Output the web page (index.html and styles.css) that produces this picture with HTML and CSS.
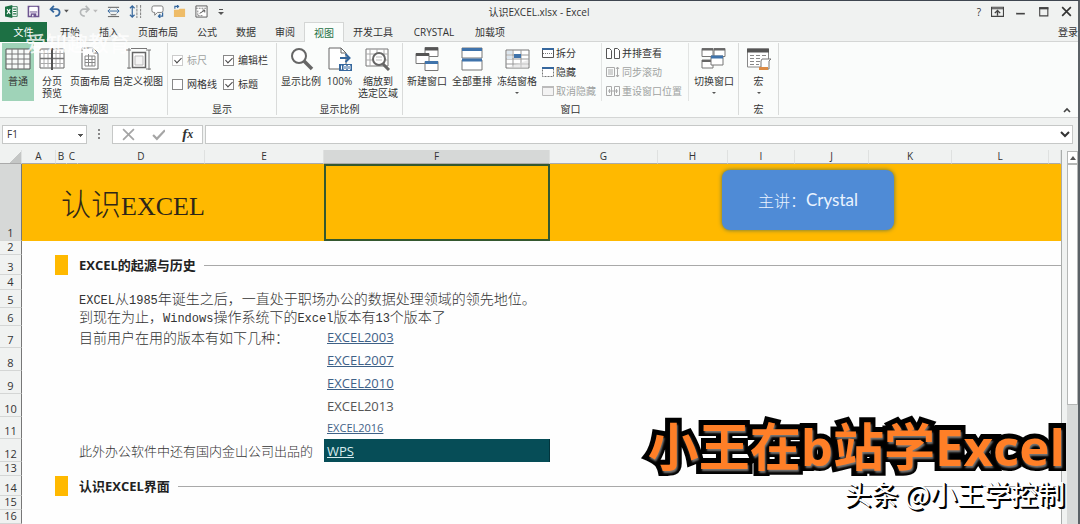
FILE: index.html
```html
<!DOCTYPE html>
<html lang="zh-CN">
<head>
<meta charset="utf-8">
<title>认识EXCEL.xlsx - Excel</title>
<link rel="stylesheet" href="styles.css">
</head>
<body>
<div class="window">
  <header class="titlebar">
    <div class="quick">
      <svg class="q" viewBox="0 0 16 16"><path d="M8 2h7v12H8" fill="#fff" stroke="#1d7044"/><path d="M10 5h4M10 8h4M10 11h4" stroke="#1d7044" stroke-width="1.5"/><path d="M0 2l9-2v16l-9-2z" fill="#1d7044"/><path d="M2.5 5l4 6M6.5 5l-4 6" stroke="#fff" stroke-width="1.4"/></svg>
      <button class="ib" aria-label="保存"><svg class="q" viewBox="0 0 14 14"><path d="M1.500 1.500h11v11h-11z" fill="#f6f2fa" stroke="#6d5590" stroke-width="1.600"/><path d="M3 2h8v5H3z" fill="#fff"/><path d="M3 7.500h8" stroke="#6d5590"/><path d="M4 9h6v4H4z" fill="#6d5590"/><path d="M5.500 10.500h1.500v2H5.500z" fill="#fff"/></svg></button>
      <button class="ib" aria-label="撤消"><svg class="w" viewBox="0 0 21 14"><path d="M5 1L1.500 4.500 5 8M2 4.500h5.500c5 0 5 7-1 7.500" fill="none" stroke="#35679d" stroke-width="2"/><path d="M16 5h5l-2.500 3z" fill="#555"/></svg></button>
      <button class="ib" aria-label="恢复"><svg class="w" viewBox="0 0 21 14"><path d="M8 1l3.500 3.500L8 8M11 4.500H6c-5 0-5 7 1 7.500" fill="none" stroke="#b4b7b8" stroke-width="1.800"/><path d="M16 5h5l-2.500 3z" fill="#bbb"/></svg></button>
      <button class="ib" aria-label="行高"><svg class="q" viewBox="0 0 14 14"><path d="M1 2.500h12M1 12.500h12M4 10.500h6" stroke="#555"/><path d="M1 6.500h12M3.500 4L1 6.500 3.500 9M10.500 4L13 6.500 10.500 9" fill="none" stroke="#35679d"/></svg></button>
      <button class="ib" aria-label="列宽"><svg class="q" viewBox="0 0 14 14"><path d="M8.500 0v14M12.500 0v14" stroke="#777" stroke-dasharray="3 1"/><path d="M3.500 1v12M1 3.500L3.500 1 6 3.500M1 10.500L3.500 13 6 10.500" fill="none" stroke="#35679d" stroke-width="1.300"/></svg></button>
      <button class="ib" aria-label="批注"><svg class="q" viewBox="0 0 14 14"><path d="M3 1h8q2 0 2 2v3q0 2-2 2H7l-3 3V8H3Q1 8 1 6V3q0-2 2-2z" fill="#fff" stroke="#777"/><path d="M12.500 8v4H8M10 10l-2 2 2 2" fill="none" stroke="#35679d" stroke-width="1.300"/></svg></button>
      <button class="ib" aria-label="打开"><svg class="q" viewBox="0 0 14 14"><path d="M1 5h5l1-1h6v9H1z" fill="#eebc68"/><path d="M2 4V1.500h4M4.500 0L6 1.500 4.500 3" fill="none" stroke="#35679d" stroke-width="1.200"/></svg></button>
      <button class="ib" aria-label="控件"><svg class="q" viewBox="0 0 14 14"><path d="M1 1h12v12H1z" fill="#fff" stroke="#555"/><path d="M1 3.500h12M3 6v5M3 11.500h5" stroke="#777" stroke-dasharray="2 1"/><path d="M5 9l5-3M8 5.500h2.500V8" fill="none" stroke="#444"/></svg></button>
      <button class="ib" aria-label="自定义快速访问工具栏"><svg class="s" viewBox="0 0 6 8"><path d="M1 1.500h4" stroke="#555"/><path d="M0 4h6L3 7z" fill="#555"/></svg></button>
    </div>
    <h1 class="doc">认识EXCEL.xlsx - Excel</h1>
    <div class="controls">
      <button class="ib" aria-label="帮助">?</button>
      <button class="ib" aria-label="功能区显示选项"><svg class="q" viewBox="0 0 12 12"><path d="M.5 2h11v8.500H.5zM.5 3.500h11" fill="none" stroke="#444"/><path d="M6 10V5M3.500 7.500L6 5l2.500 2.500" fill="none" stroke="#444" stroke-width="1.300"/></svg></button>
      <button class="ib" aria-label="最小化"><svg class="q" viewBox="0 0 12 12"><path d="M2 8h8" stroke="#444" stroke-width="1.500"/></svg></button>
      <button class="ib" aria-label="最大化"><svg class="q" viewBox="0 0 12 12"><path d="M2.500 2.500h7.500v7.500H2.500z" fill="none" stroke="#444"/><path d="M2 3h8.500" stroke="#444" stroke-width="2"/></svg></button>
      <button class="ib" aria-label="关闭"><svg class="q" viewBox="0 0 12 12"><path d="M2 2l8 8M10 2l-8 8" stroke="#333" stroke-width="1.500"/></svg></button>
    </div>
  </header>

  <nav class="tabs">
    <button class="tab file">文件</button>
    <button class="tab">开始</button>
    <button class="tab">插入</button>
    <button class="tab">页面布局</button>
    <button class="tab">公式</button>
    <button class="tab">数据</button>
    <button class="tab">审阅</button>
    <button class="tab active">视图</button>
    <button class="tab">开发工具</button>
    <button class="tab">CRYSTAL</button>
    <button class="tab">加载项</button>
    <button class="tab login">登录</button>
  </nav>

  <section class="ribbon">
    <div class="group views">
      <div class="items">
        <button class="big on"><svg viewBox="0 0 26 24"><path d="M1 2h24v20H1z" fill="#f7faf8" stroke="#555"/><path d="M7 2v20M13 2v20M19 2v20M1 7h24M1 12h24M1 17h24" stroke="#777"/></svg><span>普通</span></button>
        <button class="big"><svg viewBox="0 0 26 24"><path d="M1 2h24v19H1z" fill="#fff" stroke="#666"/><path d="M5 2v19M9 2v19M17 2v19M21 2v19M1 6.500h24M1 16.500h24" stroke="#aaa"/><path d="M1 11.500h24" stroke="#777" stroke-width="1.500"/><path d="M13 1v22" stroke="#555" stroke-width="2"/></svg><span>分页<br>预览</span></button>
        <button class="big"><svg viewBox="0 0 26 24"><path d="M5 1h11l5 5v16H5z" fill="#fff" stroke="#666"/><path d="M16 1v5h5" fill="none" stroke="#666"/><path d="M8 9h10v10H8zM11.500 7v12M15 9v10M8 12.500h10M8 15.500h10" fill="none" stroke="#888"/></svg><span>页面布局</span></button>
        <button class="big"><svg viewBox="0 0 26 24"><path d="M1 3h5M4 1v21M24 3v20M21 3h5M21 22h5M2 21h4M6 1.500h16" stroke="#777" fill="none"/><path d="M7.500 5.500h13v15h-13z" fill="#fff" stroke="#666" stroke-width="1.500"/><path d="M10 9h8v9h-8z" fill="#f4f4f4" stroke="#bbb"/></svg><span>自定义视图</span></button>
      </div>
      <div class="caption">工作簿视图</div>
    </div>
    <div class="group show">
      <div class="items checks">
        <label class="off"><input type="checkbox" checked disabled>标尺</label>
        <label><input type="checkbox" checked>编辑栏</label>
        <label><input type="checkbox">网格线</label>
        <label><input type="checkbox" checked>标题</label>
      </div>
      <div class="caption">显示</div>
    </div>
    <div class="group zoom">
      <div class="items">
        <button class="big"><svg viewBox="0 0 26 24"><circle cx="11" cy="9" r="7" fill="#fff" stroke="#666" stroke-width="2"/><path d="M16 14l8 8" stroke="#666" stroke-width="3.500"/></svg><span>显示比例</span></button>
        <button class="big"><svg viewBox="0 0 26 24"><path d="M2 1h12l5 5v16H2z" fill="#fff" stroke="#666"/><path d="M14 1v5h5" fill="none" stroke="#666"/><path d="M13 11h9M18.500 7l4 4-4 4" fill="none" stroke="#35679d" stroke-width="2"/><path d="M12 17h13v7H12z" fill="#35679d"/><path d="M14.500 18.500v4M17 18.500h2v4h-2zM21 18.500h2v4h-2z" stroke="#fff" fill="none"/></svg><span>100%</span></button>
        <button class="big"><svg viewBox="0 0 26 24"><path d="M1 2h22v17H1z" fill="#fff" stroke="#777"/><path d="M5 2v17M12 2v17M19 2v17M1 7h22M1 13h22" stroke="#aaa"/><circle cx="14" cy="12" r="6" fill="#fff" stroke="#666" stroke-width="2"/><path d="M11 10h6M11 13h6" stroke="#bbb"/><path d="M18 17l6 6" stroke="#666" stroke-width="3"/></svg><span>缩放到<br>选定区域</span></button>
      </div>
      <div class="caption">显示比例</div>
    </div>
    <div class="group panes">
      <div class="items">
        <button class="big"><svg viewBox="0 0 26 24"><path d="M11 .5h13v9H11z" fill="#fff" stroke="#777"/><path d="M11 2h13" stroke="#555" stroke-width="3"/><path d="M2 6.500h13v10H2z" fill="#fff" stroke="#777"/><path d="M2 7.500h13" stroke="#555" stroke-width="3"/><path d="M11 14.500h13v9H11z" fill="#fff" stroke="#777"/><path d="M11 15.500h13" stroke="#3f73ab" stroke-width="3"/></svg><span>新建窗口</span></button>
        <button class="big"><svg viewBox="0 0 26 24"><path d="M3 1h20v10H3zM3 13h20v10H3z" fill="#fff" stroke="#777"/><path d="M3 2.500h20M3 13h20" stroke="#3f73ab" stroke-width="3"/></svg><span>全部重排</span></button>
        <button class="big drop"><svg viewBox="0 0 26 24"><path d="M2 3h23v18H2z" fill="#fff" stroke="#777"/><path d="M9 3v18M17 3v18M2 8h23M2 12h23M2 17h23" stroke="#999"/><path d="M3 4h5v3H3zM3 9h5v3H3z" fill="#dce6ee"/><path d="M10 7h7v4h-7z" fill="#3f73ab"/><path d="M3 21l21-8v8z" fill="#ddd" opacity=".6"/></svg><span>冻结窗格</span></button>
        <div class="small">
          <button class="line"><svg viewBox="0 0 12 12"><path d="M.5 1.500h11v9H.5z" fill="#fff" stroke="#555"/><path d="M0 2h12" stroke="#35679d" stroke-width="2"/><path d="M1 6.500h10" stroke="#777" stroke-dasharray="1 1"/></svg>拆分</button>
          <button class="line"><svg viewBox="0 0 12 12"><path d="M.5 1.500h11v9H.5z" fill="#fff" stroke="#777" stroke-dasharray="2 1"/><path d="M0 2h12" stroke="#35679d" stroke-width="2"/></svg>隐藏</button>
          <button class="line off" disabled><svg viewBox="0 0 12 12"><path d="M.5 1.500h11v9H.5z" fill="#f3f3f3" stroke="#bbb"/><path d="M0 2h12" stroke="#bbb" stroke-width="2"/></svg>取消隐藏</button>
        </div>
        <div class="small ruled">
          <button class="line"><svg class="wide" viewBox="0 0 14 12"><path d="M.5 1.500h3l2 2v8h-5zM8.500 1.500h3l2 2v8h-5z" fill="#fff" stroke="#555"/></svg>并排查看</button>
          <button class="line off" disabled><svg class="wide" viewBox="0 0 14 12"><path d="M.5 1.500h8v9h-8zM2 4h5M2 6h5M2 8h5M11.500 1v10M10 3l1.500-2L13 3M10 9l1.500 2L13 9" fill="none" stroke="#aaa"/></svg>同步滚动</button>
          <button class="line off" disabled><svg class="wide" viewBox="0 0 14 12"><path d="M.5 1.500h5v9h-5zM8.500 1.500h5v9h-5zM2 6h10M3.500 4v4M10.500 4v4" fill="none" stroke="#aaa"/></svg>重设窗口位置</button>
        </div>
        <button class="big drop"><svg viewBox="0 0 26 24"><path d="M1 1.500h11v8H1zM13 1.500h11v8H13zM1 13h11v8H1z" fill="#fff" stroke="#777"/><path d="M1 2.500h11M13 2.500h11M1 14h11" stroke="#666" stroke-width="2"/><path d="M10 9h12v9H10z" fill="#fff" stroke="#777"/><path d="M10 10h12" stroke="#3f73ab" stroke-width="3"/></svg><span>切换窗口</span></button>
      </div>
      <div class="caption">窗口</div>
    </div>
    <div class="group macro">
      <div class="items">
        <button class="big drop"><svg viewBox="0 0 26 24"><path d="M1.500 2h21v18h-21z" fill="#fff" stroke="#888"/><path d="M1 3.500h22" stroke="#555" stroke-width="4"/><path d="M4 8.500h4M10 8.500h4M16 8.500h4M4 11.500h4M10 11.500h4M4 14.500h4M10 14.500h4M4 17.500h4M10 17.500h3" stroke="#888"/><path d="M16 12h9l-2 2v8h-8v-8z" fill="#fff" stroke="#777"/><path d="M13 20h9v3h-9z" fill="#dc8b45"/></svg><span>宏</span></button>
      </div>
      <div class="caption">宏</div>
    </div>
    <button class="ib collapse" aria-label="折叠功能区"><svg class="s" viewBox="0 0 8 8"><path d="M1 6l3-3 3 3" fill="none" stroke="#444" stroke-width="1.600"/></svg></button>
  </section>

  <section class="formula">
    <select class="namebox" aria-label="名称框"><option>F1</option></select>
    <svg class="dots" viewBox="0 0 4 12"><path d="M1 1h2v2H1zM1 5h2v2H1zM1 9h2v2H1z" fill="#888"/></svg>
    <div class="fx">
      <button class="ib" aria-label="取消"><svg class="q" viewBox="0 0 12 12"><path d="M1 1l10 10M11 1L1 11" stroke="#a5a5a5" stroke-width="1.600"/></svg></button>
      <button class="ib" aria-label="输入"><svg class="q" viewBox="0 0 12 12"><path d="M1 6.500L4.500 10 12 2" fill="none" stroke="#a5a5a5" stroke-width="2"/></svg></button>
      <button class="ib func" aria-label="插入函数">f<small>x</small></button>
    </div>
    <div class="entry">
      <input type="text" aria-label="编辑栏">
      <svg class="chev" viewBox="0 0 10 8"><path d="M1 2l4 4 4-4" fill="none" stroke="#333" stroke-width="2"/></svg>
    </div>
  </section>

  <main class="sheet">
    <table class="grid">
      <colgroup><col class="c-n"><col class="c-a"><col class="c-b"><col class="c-c"><col class="c-d"><col class="c-e"><col class="c-f"><col class="c-g"><col class="c-h"><col class="c-i"><col class="c-j"><col class="c-k"><col class="c-l"><col></colgroup>
      <thead>
        <tr><th class="corner"></th><th>A</th><th>B</th><th>C</th><th>D</th><th>E</th><th class="sel">F</th><th>G</th><th>H</th><th>I</th><th>J</th><th>K</th><th>L</th><th></th></tr>
      </thead>
      <tbody>
        <tr class="banner"><th class="sel">1</th><td></td><td colspan="4" class="title">认识<span>EXCEL</span></td><td class="cursor"></td><td></td><td></td><td class="anchor"><div class="card">主讲：<span>Crystal</span></div></td><td colspan="4"></td></tr>
        <tr class="r14"><th>2</th><td colspan="13"></td></tr>
        <tr class="r20"><th>3</th><td></td><td class="mark"></td><td></td><td colspan="10"><h2><span>EXCEL的起源与历史</span></h2></td></tr>
        <tr class="r15"><th>4</th><td colspan="13"></td></tr>
        <tr class="r18"><th>5</th><td colspan="3"></td><td colspan="10" class="text"><span>EXCEL</span>从<span>1985</span>年诞生之后，一直处于职场办公的数据处理领域的领先地位。</td></tr>
        <tr class="r18"><th>6</th><td colspan="3"></td><td colspan="10" class="text">到现在为止，<span>Windows</span>操作系统下的<span>Excel</span>版本有<span>13</span>个版本了</td></tr>
        <tr class="r22"><th>7</th><td colspan="3"></td><td colspan="2" class="text">目前用户在用的版本有如下几种：</td><td class="ver"><a href="#">EXCEL2003</a></td><td colspan="7"></td></tr>
        <tr class="r23"><th>8</th><td colspan="5"></td><td class="ver"><a href="#">EXCEL2007</a></td><td colspan="7"></td></tr>
        <tr class="r23"><th>9</th><td colspan="5"></td><td class="ver"><a href="#">EXCEL2010</a></td><td colspan="7"></td></tr>
        <tr class="r23"><th>10</th><td colspan="5"></td><td class="ver">EXCEL2013</td><td colspan="7"></td></tr>
        <tr class="r22"><th>11</th><td colspan="5"></td><td class="ver tiny"><a href="#">EXCEL2016</a></td><td colspan="7"></td></tr>
        <tr class="r23"><th>12</th><td colspan="3"></td><td colspan="2" class="text tight">此外办公软件中还有国内金山公司出品的</td><td class="ver wps"><a href="#">WPS</a></td><td colspan="7"></td></tr>
        <tr class="r14"><th>13</th><td colspan="13"></td></tr>
        <tr class="r20"><th>14</th><td></td><td class="mark"></td><td></td><td colspan="10"><h2><span>认识EXCEL界面</span></h2></td></tr>
        <tr class="r14"><th>15</th><td colspan="13"></td></tr>
        <tr class="r14"><th>16</th><td colspan="13"></td></tr>
        <tr class="r20"><th></th><td></td><td class="mark"></td><td colspan="11"></td></tr>
      </tbody>
    </table>
    <div class="scroll">
      <button class="up" aria-label="向上滚动"><svg class="s" viewBox="0 0 8 8"><path d="M1 6l3-4 3 4z" fill="#555"/></svg></button>
      <div class="thumb"></div>
      <div class="track"></div>
    </div>
  </main>
</div>
<div class="watermark">爱知趣教育</div>
<div class="credits"><p class="headline">小王在b站学Excel</p><p class="author">头条 @小王学控制</p></div>
</body>
</html>
```

FILE: styles.css
```css
* { box-sizing: border-box; }
body {
  margin: 0;
  height: 100vh;
  overflow: hidden;
  position: relative;
  font: 10px/12px "Open Sans", "Noto Sans CJK SC", sans-serif;
  color: #333;
}
button {
  font: inherit;
  color: inherit;
  background: none;
  border: 0;
  padding: 0;
  white-space: nowrap;
}
svg { display: block; }
h1, h2, p { margin: 0; }
.window {
  height: 100%;
  display: flex;
  flex-direction: column;
  background: #f0f2f1;
  border-top: 1px solid #3f4650;
  border-right: 2px solid #5b6166;
}

.titlebar {
  display: grid;
  grid-template-columns: 1fr auto 1fr;
  align-items: center;
  height: 21px;
  flex: none;
}
.quick, .controls { display: flex; align-items: center; }
.quick { gap: 9px; padding-left: 5px; }
.controls { justify-content: flex-end; gap: 10px; padding-right: 5px; }
.doc { font-size: 10px; font-weight: 400; }
.ib { display: flex; align-items: center; justify-content: center; flex: none; }
.q { width: 13px; height: 13px; }
.w { width: 20px; height: 13px; }
.s { width: 8px; height: 8px; }

.tabs {
  display: flex;
  height: 20px;
  flex: none;
  border-bottom: 1px solid #d4d6d5;
}
.tab { height: 20px; padding: 0 10px; margin-right: -1px; }
.tab:nth-child(n+2) { width: 40px; flex: none; padding: 0; }
.tab:nth-child(4), .tab:nth-child(9) { width: 60px; }
.tab:nth-child(10) { width: 64px; }
.tab:nth-child(11) { width: 50px; }
.tab.file { width: 47px; margin-right: 3px; background: #1d7044; color: #fff; }
.tab.active {
  background: #fafcfb;
  border: 1px solid #d4d6d5;
  border-bottom: 0;
  color: #1d7044;
}
.tab.login { width: 20px; margin: 0 0 0 auto; }

.ribbon {
  display: flex;
  height: 76px;
  flex: none;
  background: #fafcfb;
  border-bottom: 1px solid #d4d6d5;
}
.group {
  display: flex;
  flex-direction: column;
  justify-content: space-between;
  border-right: 1px solid #d9dbda;
  margin: 1px 0 2px;
}
.items { display: flex; justify-content: space-between; padding: 0 4px; }
.caption { text-align: center; }
.views { width: 168px; }
.views .items { padding: 0 4px 0 2px; }
.show { width: 109px; }
.zoom { width: 126px; }
.panes { width: 336px; }
.macro { width: 40px; }
.macro .items { justify-content: center; }
.big {
  min-width: 30px;
  height: 58px;
  display: flex;
  flex-direction: column;
  align-items: center;
  padding-top: 4px;
}
.big svg { width: 26px; height: 24px; margin-bottom: 4px; }
.big.on { width: 32px; background: #9fd3b8; }
.drop::after {
  content: "";
  border: 2px solid transparent;
  border-top-color: #555;
  margin-top: 5px;
}
.checks {
  display: grid;
  grid-template-columns: 51px 1fr;
  grid-auto-rows: 24px;
  padding-top: 5px;
  align-items: center;
}
.checks label { display: flex; align-items: center; gap: 4px; white-space: nowrap; }
.checks input {
  appearance: none;
  width: 11px;
  height: 11px;
  margin: 0;
  border: 1px solid #888;
  background: #fff;
  display: grid;
  place-items: center;
}
.checks input:checked::after {
  content: "";
  width: 3px;
  height: 6px;
  margin-bottom: 2px;
  border: solid #444;
  border-width: 0 1px 1px 0;
  transform: rotate(45deg);
}
.off { color: #a0a3a2; }
.checks .off input { border-color: #ccc; }
.small { display: flex; flex-direction: column; gap: 7px; padding-top: 4px; }
.small.ruled { padding: 4px 6px 0 4px; border: solid #e2e4e3; border-width: 0 1px; }
.line { display: flex; align-items: center; gap: 2px; }
.line svg { width: 12px; height: 12px; }
.line svg.wide { width: 14px; }
.collapse { margin: auto 7px 3px auto; }

.formula {
  display: flex;
  align-items: center;
  height: 32px;
  flex: none;
  padding: 0 5px 0 2px;
}
.namebox, .fx, .entry { height: 19px; border: 1px solid #c6c8c7; background: #fff; }
.namebox {
  appearance: none;
  width: 85px;
  font: inherit;
  color: inherit;
  padding: 0 4px;
  border-radius: 0;
  background: linear-gradient(#555, #555) 75px 8px / 5px 1px no-repeat, linear-gradient(#555, #555) 76px 9px / 3px 1px no-repeat, linear-gradient(#555, #555) 77px 10px / 1px 1px no-repeat, #fff;
}
.dots { width: 4px; height: 12px; margin: 0 11px 0 10px; }
.fx { display: flex; align-items: center; justify-content: space-around; width: 91px; margin-right: 2px; }
.func { font: italic bold 15px/16px "Liberation Serif", serif; }
.func small { font-size: 12px; }
.entry { flex: 1; display: flex; align-items: center; padding-right: 2px; }
.entry input { flex: 1; border: 0; outline: 0; background: none; font: inherit; min-width: 0; }
.chev { width: 10px; height: 8px; }

.sheet { flex: 1; display: flex; min-height: 0; overflow: hidden; align-items: stretch; }
.grid {
  flex: 1;
  min-width: 0;
  align-self: flex-start;
  table-layout: fixed;
  border-collapse: separate;
  border-spacing: 0;
  background: #fefefe;
  border-right: 1px solid #a9acab;
}
.c-n { width: 22px; }
.c-a { width: 34px; }
.c-b { width: 11px; }
.c-c { width: 11px; }
.c-d { width: 127px; }
.c-e { width: 119px; }
.c-f { width: 226px; }
.c-g { width: 108px; }
.c-h { width: 70px; }
.c-i { width: 67px; }
.c-j { width: 74px; }
.c-k { width: 83px; }
.c-l { width: 97px; }
.grid td, .grid th { padding: 0; white-space: nowrap; }
.grid th { font-weight: 400; background: #f0f2f1; line-height: 13px; }
thead th { height: 13px; border-right: 1px solid #dfe1e0; border-bottom: 1px solid #aaa; }
thead th:nth-child(3), thead th:nth-child(4) { border-right-color: transparent; }
.grid tbody th {
  vertical-align: bottom;
  border-right: 1px solid #777;
  border-bottom: 1px solid #d4d6d5;
  padding-bottom: 1px;
  font-size: 11px;
  line-height: 12px;
}
.grid th.sel { background: #d6d8d7; }
.grid .corner { background: linear-gradient(135deg, #f0f2f1 65%, #c4c6c5 65%); }
.banner { height: 77px; }
.banner td { background: #ffb900; }
.r14 { height: 14px; }
.r15 { height: 15px; }
.r18 { height: 18px; }
.r20 { height: 20px; }
.r22 { height: 22px; }
.r23 { height: 23px; }
.banner .title {
  padding: 4px 0 0 5px;
  font: 300 30px/36px "Noto Sans CJK SC", sans-serif;
  color: #2e2618;
}
.title span { font: 26px/36px "Liberation Serif", serif; }
.banner .cursor { border: 2px solid #34582f; }
.anchor { position: relative; }
.card {
  position: absolute;
  top: 6px;
  left: -6px;
  width: 172px;
  height: 60px;
  display: flex;
  align-items: center;
  justify-content: center;
  border-radius: 8px;
  background: #4f8bd6;
  box-shadow: 0 0 4px #55704a;
  font: 300 16px/20px "Noto Sans CJK SC", sans-serif;
  color: #eaf3ff;
}
.card span { font: 17px/20px Lato, sans-serif; }
.mark { background: #ffb900; box-shadow: 1px 0 #ffb900, -1px 0 #ffb900; }
h2 {
  display: flex;
  align-items: center;
  gap: 8px;
  padding-left: 1px;
  font: bold 13px/18px "Open Sans", "Noto Sans CJK SC", sans-serif;
  color: #222;
}
h2::after { content: ""; flex: 1; height: 1px; background: #a9a9a9; }
.grid .text {
  padding-left: 1px;
  font: 300 14px/14px "Noto Sans CJK SC", sans-serif;
  color: #333;
}
.text span { font: 12px/12px "Liberation Mono", monospace; }
.grid .text.tight { font-size: 13px; }
.grid .ver { padding-left: 3px; font-size: 13px; line-height: 18px; color: #555; }
.ver a { color: #3e6187; text-decoration: underline; }
.grid .tiny { font-size: 11px; }
.grid .wps { background: #064d57; border: 1px solid #03343c; border-width: 0 1px 0 0; }
.grid .wps a { color: #d9ecee; }

.scroll {
  width: 16px;
  padding: 1px 0 0 5px;
  display: flex;
  flex-direction: column;
}
.up { height: 13px; border: 1px solid #b5b7b6; background: #fff; display: grid; place-items: center; }
.thumb { flex: 2; border: 1px solid #b5b7b6; background: #fefefe; }
.track { flex: 1; background: #d8dad9; }

.watermark {
  position: absolute;
  left: 25px;
  top: 30px;
  font: 500 21px/24px "Noto Sans CJK SC", sans-serif;
  color: #fff;
  opacity: .8;
}
.credits { position: absolute; right: 15px; bottom: 14px; text-align: right; white-space: nowrap; }
.headline {
  font: bold 51px/54px "Open Sans", "Noto Sans CJK SC", sans-serif;
  color: #ff7f27;
  -webkit-text-stroke: 10px #000;
  paint-order: stroke fill;
  stroke-linejoin: round;
  text-shadow: 1px 2px 2px #777;
  margin-bottom: 5px;
}
.author {
  font: 27px/32px "Noto Sans CJK SC", sans-serif;
  color: #fff;
  text-shadow: 1px 1px #000, 2px 2px #000;
}
```
